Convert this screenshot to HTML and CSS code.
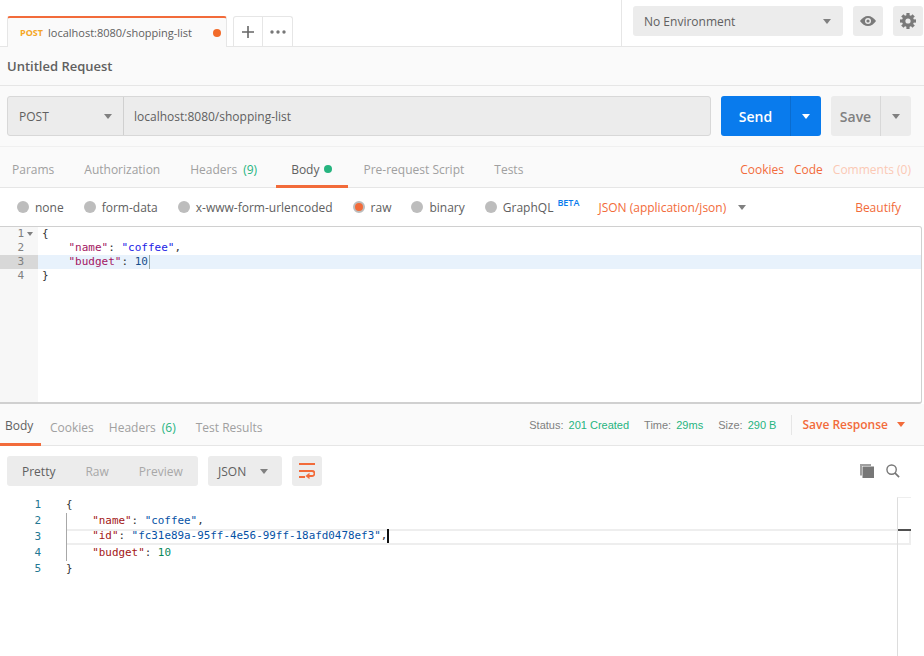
FILE: index.html
```html
<!DOCTYPE html>
<html lang="en">
<head>
    <meta charset="UTF-8">
    <title>Untitled Request</title>
    <link rel="stylesheet" href="styles.css">
</head>
<body>
    <header class="topbar">
        <div class="tab">
            <span class="tab-method">POST</span>
            <span class="tab-url">localhost:8080/shopping-list</span>
            <span class="tab-dot"></span>
        </div>
        <div class="tab-btn tab-plus">
            <svg width="14" height="14" viewBox="0 0 14 14"><path d="M7 1v12M1 7h12" stroke="#666" stroke-width="1.6" fill="none"/></svg>
        </div>
        <div class="tab-btn tab-more">
            <svg width="16" height="4" viewBox="0 0 16 4"><circle cx="2" cy="2" r="1.7" fill="#777"/><circle cx="8" cy="2" r="1.7" fill="#777"/><circle cx="14" cy="2" r="1.7" fill="#777"/></svg>
        </div>
        <div class="env-area">
            <div class="env-select">
                <span>No Environment</span>
                <span class="caret"></span>
            </div>
            <div class="icon-btn">
                <svg width="16" height="10" viewBox="0 0 16 10"><path d="M0 5C2 2 5 0 8 0s6 2 8 5c-2 3-5 5-8 5S2 8 0 5z" fill="#7a7a7a"/><circle cx="8" cy="5" r="3" fill="#ececec"/><circle cx="8" cy="5" r="1.6" fill="#7a7a7a"/></svg>
            </div>
            <div class="icon-btn">
                <svg width="16" height="16" viewBox="0 0 16 16"><g fill="#7a7a7a"><circle cx="8" cy="8" r="6"/><rect x="6.4" y="0" width="3.2" height="16"/><rect x="6.4" y="0" width="3.2" height="16" transform="rotate(45 8 8)"/><rect x="6.4" y="0" width="3.2" height="16" transform="rotate(90 8 8)"/><rect x="6.4" y="0" width="3.2" height="16" transform="rotate(135 8 8)"/></g><circle cx="8" cy="8" r="2.6" fill="#ececec"/></svg>
            </div>
        </div>
    </header>

    <div class="title-row">Untitled Request</div>

    <div class="url-row">
        <div class="url-box">
            <div class="method-select">
                <span>POST</span>
                <span class="caret"></span>
            </div>
            <div class="url-input">localhost:8080/shopping-list</div>
        </div>
        <div class="split-btn send-btn">
            <span class="split-label">Send</span>
            <span class="split-arrow"><span class="caret caret-white"></span></span>
        </div>
        <div class="split-btn save-btn">
            <span class="split-label">Save</span>
            <span class="split-arrow"><span class="caret"></span></span>
        </div>
    </div>

    <nav class="req-tabs">
        <span class="req-tab">Params</span>
        <span class="req-tab">Authorization</span>
        <span class="req-tab">Headers <em class="count">(9)</em></span>
        <span class="req-tab active">Body <i class="green-dot"></i></span>
        <span class="req-tab">Pre-request Script</span>
        <span class="req-tab">Tests</span>
        <span class="req-links">
            <a>Cookies</a>
            <a>Code</a>
            <a class="faded">Comments (0)</a>
        </span>
    </nav>

    <div class="body-types">
        <label class="radio"><i></i>none</label>
        <label class="radio"><i></i>form-data</label>
        <label class="radio"><i></i>x-www-form-urlencoded</label>
        <label class="radio checked"><i></i>raw</label>
        <label class="radio"><i></i>binary</label>
        <label class="radio graphql"><i></i>GraphQL<sup>BETA</sup></label>
        <span class="json-select">JSON (application/json)</span>
        <span class="caret"></span>
        <a class="beautify">Beautify</a>
    </div>

    <section class="req-editor">
        <div class="gutter">
            <div class="gl">1<b class="fold"></b></div>
            <div class="gl">2</div>
            <div class="gl current">3</div>
            <div class="gl">4</div>
        </div>
        <pre class="req-code"><div class="cl">{</div><div class="cl">    <span class="key">"name"</span>: <span class="str">"coffee"</span>,</div><div class="cl current"><span>    <span class="key">"budget"</span>: <span class="num">10</span><span class="cursor"></span></span></div><div class="cl">}</div></pre>
    </section>

    <nav class="res-tabs">
        <span class="res-tab active">Body</span>
        <span class="res-tab">Cookies</span>
        <span class="res-tab res-headers">Headers <em class="count">(6)</em></span>
        <span class="res-tab res-tests">Test Results</span>
        <span class="res-meta">
            <span class="meta">Status: <b>201 Created</b></span>
            <span class="meta">Time: <b>29ms</b></span>
            <span class="meta">Size: <b>290 B</b></span>
            <span class="save-response">Save Response <span class="caret caret-orange"></span></span>
        </span>
    </nav>

    <div class="res-toolbar">
        <div class="view-group">
            <span class="on">Pretty</span>
            <span>Raw</span>
            <span>Preview</span>
        </div>
        <div class="lang-select">
            <span>JSON</span>
            <span class="caret"></span>
        </div>
        <div class="wrap-btn">
            <svg width="16" height="16" viewBox="0 0 16 16"><path d="M0 1h16M0 8h13a2.500 2.500 0 0 1 0 5H9M0 14h6" stroke="#f26b3a" stroke-width="1.8" fill="none"/><path d="M10.500 9.800v6.400L6.500 13z" fill="#f26b3a"/></svg>
        </div>
        <div class="res-tools">
            <svg width="14" height="14" viewBox="0 0 14 14"><path d="M0 1.500h2v10H0zM0 0h11v2H0z" fill="#a0a0a0"/><rect x="2.500" y="2.500" width="11.500" height="11.500" fill="#777"/></svg>
            <svg width="14" height="14" viewBox="0 0 15 15"><circle cx="6" cy="6" r="5" stroke="#777" stroke-width="1.500" fill="none"/><path d="M9.500 9.500L14 14" stroke="#777" stroke-width="1.800"/></svg>
        </div>
    </div>

    <section class="res-editor">
        <div class="res-gutter">
            <div>1</div>
            <div>2</div>
            <div>3</div>
            <div>4</div>
            <div>5</div>
        </div>
        <pre class="res-code"><div class="rl">{</div><div class="rl guide">    <span class="rkey">"name"</span>: <span class="rstr">"coffee"</span>,</div><div class="rl guide current">    <span class="rkey">"id"</span>: <span class="rstr">"fc31e89a-95ff-4e56-99ff-18afd0478ef3"</span>,<span class="rcursor"></span></div><div class="rl guide">    <span class="rkey">"budget"</span>: <span class="rnum">10</span></div><div class="rl">}</div></pre>
        <div class="minimap"><span class="mini-tick"></span></div>
    </section>
</body>
</html>
```

FILE: styles.css
```css
* { box-sizing: border-box; }
html, body { height: 100%; }
body { margin: 0; width: 924px; height: 656px; overflow: hidden; background: #fff; font-family: "Open Sans", sans-serif; font-size: 12px; color: #505050; }

.caret { display: inline-block; width: 0; height: 0; border-left: 4px solid transparent; border-right: 4px solid transparent; border-top: 5px solid #808080; }
.caret-white { border-top-color: #fff; }
.caret-orange { border-top-color: #f26b3a; }

/* top bar */
.topbar { display: flex; height: 47px; padding-left: 7px; border-bottom: 1px solid #e6e6e6; position: relative; align-items: flex-end; }
.tab { display: flex; align-items: center; width: 220px; height: 31px; margin-bottom: -1px; padding: 0 5px 0 12px; background: #fafafa; border: 1px solid #e6e6e6; border-top: 2px solid #f26b3a; border-bottom: 0; border-radius: 3px 3px 0 0; position: relative; }
.tab-method { font-size: 9px; font-weight: 700; color: #f5a623; margin-right: 5px; }
.tab-url { font-size: 11px; color: #606060; flex: 1; line-height: 1; }
.tab-dot { width: 8px; height: 8px; border-radius: 50%; background: #f26b2a; }
.tab-btn { display: flex; align-items: center; justify-content: center; height: 30px; width: 30px; background: #fff; border: 1px solid #e6e6e6; border-bottom: 0; }
.tab-plus { margin-left: 6px; border-radius: 3px 0 0 0; }
.tab-more { width: 31px; margin-left: -1px; border-radius: 0 3px 0 0; }
.env-area { display: flex; align-items: flex-start; gap: 10px; margin-left: auto; height: 46px; padding: 6px 1px 0 11px; border-left: 1px solid #e6e6e6; }
.env-select { display: flex; align-items: center; justify-content: space-between; width: 210px; height: 30px; padding: 0 12px 0 11px; background: #ececec; border-radius: 3px; font-size: 12px; color: #606060; }
.icon-btn { display: flex; align-items: center; justify-content: center; width: 30px; height: 30px; background: #ececec; border-radius: 3px; }

/* title + url */
.title-row { height: 39px; padding: 11px 0 0 7px; background: #fafafa; border-bottom: 1px solid #e6e6e6; font-size: 13px; font-weight: 600; color: #606060; line-height: 17px; }
.url-row { display: flex; height: 61px; padding: 10px 13px 0 7px; background: #fafafa; border-bottom: 1px solid #f0f0f0; }
.url-box { display: flex; width: 704px; height: 40px; background: #ececec; border: 1px solid #d8d8d8; border-radius: 3px; }
.method-select { display: flex; align-items: center; justify-content: space-between; width: 116px; padding: 0 11px; border-right: 1px solid #d0d0d0; font-size: 12px; color: #606060; }
.url-input { display: flex; align-items: center; padding-left: 10px; font-size: 12px; color: #606060; }
.split-btn { display: flex; height: 40px; border-radius: 3px; font-size: 14px; font-weight: 600; }
.split-label { display: flex; align-items: center; justify-content: center; }
.split-arrow { display: flex; align-items: center; justify-content: center; width: 31px; border-left: 1px solid; }
.send-btn { width: 100px; margin-left: 10px; background: #097bed; color: #fff; }
.send-btn .split-label { width: 69px; }
.send-btn .split-arrow { border-left-color: #0a6ccf; }
.save-btn { width: 80px; margin-left: 10px; background: #ececec; color: #808080; }
.save-btn .split-label { width: 49px; }
.save-btn .split-arrow { border-left-color: #d8d8d8; }

/* request tabs */
.req-tabs { display: flex; align-items: stretch; height: 41px; background: #fafafa; border-bottom: 1px solid #e6e6e6; font-size: 12px; color: #a0a0a0; }
.req-tab { display: flex; align-items: center; gap: 6px; padding: 3px 15px 0; margin-bottom: -1px; }
.req-tab:first-child { padding-left: 12px; }
.req-tab.active { gap: 5px; margin-left: 4px; padding: 6px 16px 0 15px; color: #606060; border-bottom: 3px solid #f26b3a; }
.count { font-style: normal; color: #26b47f; }
.green-dot { display: inline-block; width: 8px; height: 8px; border-radius: 50%; background: #26b47f; }
.req-links { display: flex; align-items: center; gap: 10px; margin-left: auto; padding: 4px 13px 0 0; color: #f26b3a; }
.req-links .faded { color: #fbc9b5; }

.body-types { display: flex; align-items: center; height: 38px; padding-left: 17px; background: #fff; font-size: 12px; }
.radio { display: flex; align-items: center; color: #606060; margin-right: 20px; white-space: nowrap; }
.radio i { width: 12px; height: 12px; margin-right: 6px; border-radius: 50%; background: #bdbdbd; }
.radio.checked i { background: #f26b3a; border: 2px solid #bdbdbd; }
.radio.graphql { margin-right: 0; }
.radio sup { align-self: flex-start; margin: -1px 0 0 4px; font-size: 9px; font-weight: 600; line-height: 10px; color: #097bed; }
.json-select { margin-left: 19px; margin-right: 12px; color: #f26b3a; }
.beautify { margin-left: auto; padding-right: 23px; color: #f26b3a; }

/* request editor */
.req-editor { display: flex; height: 178px; margin-right: 2px; border: 1px solid #d0d0d0; border-width: 1px 1px 2px 0; border-radius: 0 3px 3px 0; overflow: hidden; }
.gutter { width: 38px; flex-shrink: 0; background: #f7f7f7; color: #808080; font-family: "DejaVu Sans Mono", monospace; font-size: 11px; }
.gl { position: relative; height: 14px; line-height: 14px; padding-right: 14px; text-align: right; }
.gl.current { background: #d8d8d8; }
.fold { position: absolute; right: 5px; top: 5px; border-left: 3px solid transparent; border-right: 3px solid transparent; border-top: 4px solid #808080; }
.req-code { flex: 1; margin: 0; font-family: "DejaVu Sans Mono", monospace; font-size: 11px; color: #333; }
.cl { height: 14px; line-height: 14px; padding-left: 4px; }
.cl.current { background: #e8f2fc; }
.key { color: #a31562; }
.str { color: #2222e6; }
.num { color: #164f8c; }
.cursor { display: inline-block; width: 1px; height: 14px; margin-left: 1px; background: #9aa; vertical-align: top; }

/* response */
.res-tabs { display: flex; align-items: stretch; height: 42px; background: #fafafa; border-bottom: 1px solid #e6e6e6; font-size: 12px; color: #a0a0a0; }
.res-tab { display: flex; align-items: center; gap: 6px; padding: 4px 8px 0; margin-bottom: -1px; }
.res-tab.active { width: 41px; padding: 4px 0 0 5px; margin-right: 1px; color: #606060; border-bottom: 3px solid #f26b3a; }
.res-headers { margin-left: -1px; }
.res-tests { margin-left: 4px; }
.res-meta { display: flex; align-items: center; margin-left: auto; padding-right: 19px; font-family: "Liberation Sans", sans-serif; font-size: 11px; color: #808080; }
.meta { margin-right: 15px; }
.meta b { margin-left: 2px; font-weight: 400; color: #26b47f; }
.save-response { display: flex; align-items: center; gap: 9px; height: 20px; padding-left: 10px; border-left: 1px solid #e6e6e6; font-family: "Open Sans", sans-serif; font-size: 12px; font-weight: 600; color: #f26b3a; }

.res-toolbar { display: flex; align-items: flex-start; height: 51px; padding: 10px 7px 0; background: #fff; }
.view-group { display: flex; align-items: center; width: 191px; height: 30px; padding-left: 15px; gap: 30px; background: #ececec; border-radius: 3px; font-size: 12px; color: #a8a8a8; }
.view-group .on { color: #606060; }
.lang-select { display: flex; align-items: center; justify-content: space-between; width: 74px; height: 30px; margin-left: 10px; padding: 0 14px 0 10px; background: #ececec; border-radius: 3px; font-size: 12px; color: #606060; }
.wrap-btn { display: flex; align-items: center; justify-content: center; width: 30px; height: 30px; margin-left: 10px; background: #ececec; border-radius: 3px; }
.res-tools { display: flex; align-items: center; gap: 12px; height: 30px; margin-left: auto; padding-right: 17px; }

.res-editor { display: flex; position: relative; height: 160px; }
.res-gutter { width: 66px; flex-shrink: 0; padding-right: 25px; text-align: right; font-family: "DejaVu Sans Mono", monospace; font-size: 11px; color: #237893; }
.res-gutter div { height: 16px; line-height: 16px; }
.res-code { flex: 1; margin: 0; font-family: "DejaVu Sans Mono", monospace; font-size: 10.9px; color: #333; }
.rl { height: 16px; line-height: 16px; }
.rl.guide { box-shadow: inset 1px 0 0 #a8a8a8; }
.rl.current { margin-right: 13px; line-height: 14px; box-shadow: inset 1px 0 0 #a8a8a8, inset 0 2px 0 #eee, inset 0 -2px 0 #eee, inset -2px 0 0 #eee; }
.rkey { color: #a31515; }
.rstr { color: #0451a5; }
.rnum { color: #09885a; }
.rcursor { display: inline-block; width: 2px; height: 14px; background: #111; vertical-align: top; }
.minimap { position: absolute; right: 13px; top: 0; width: 14px; height: 160px; border-left: 1px solid #ddd; border-top: 1px solid #eee; }
.mini-tick { position: absolute; left: 0; right: 0; top: 31px; height: 2px; background: #505050; }
```
